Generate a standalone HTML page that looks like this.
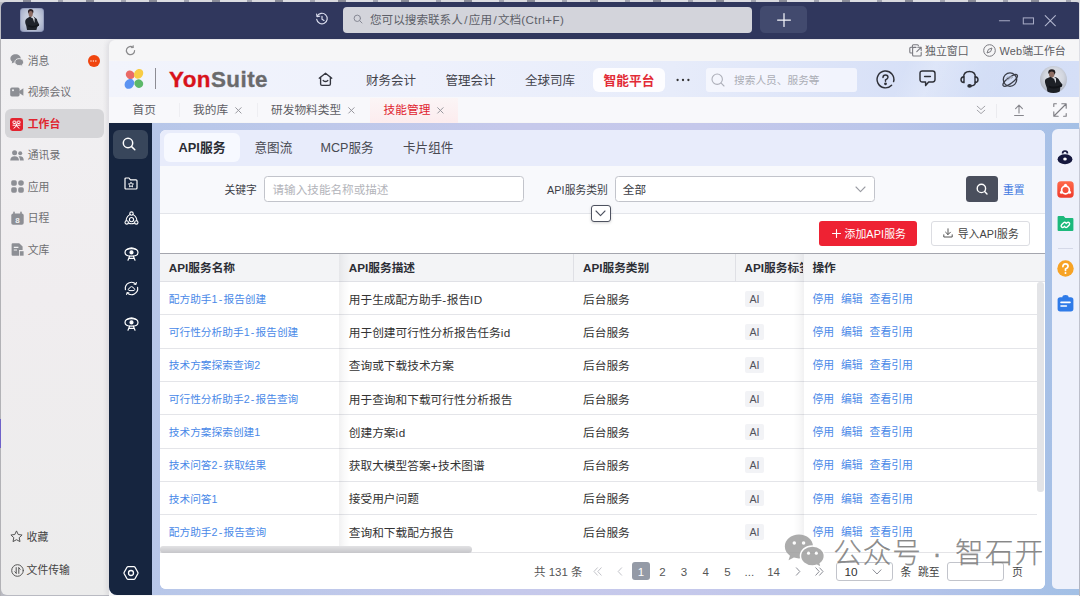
<!DOCTYPE html>
<html lang="zh-CN">
<head>
<meta charset="utf-8">
<title>YonSuite - 技能管理</title>
<style>
*{box-sizing:border-box;margin:0;padding:0}
html,body{width:1080px;height:596px;overflow:hidden}
body{font-family:"Liberation Sans","Noto Sans CJK SC",sans-serif;background:#b9bac2;position:relative;color:#333;font-size:11.5px}
.a{position:absolute}
.t{position:absolute;white-space:nowrap;line-height:16px;height:16px}
svg{position:absolute;overflow:visible}
.side{color:#6e6e72;font-size:10.8px}
.nav{font-size:12.5px;color:#42434b}
.tab{font-size:11.7px;color:#5e5e64}
.th{font-size:11.7px;font-weight:bold;color:#2c2e35}
.lk{font-size:10.7px;color:#4989e8}
.lk .ls{letter-spacing:1.2px}
.td .ls{letter-spacing:.5px}
.td{font-size:11.7px;color:#333}
.op{font-size:10.8px;color:#4989e8}
.pg{font-size:11.5px;color:#555}
.wm{height:40px;line-height:40px;font-size:28.6px;font-weight:300;color:rgba(112,112,112,.8);letter-spacing:.3px;-webkit-text-stroke:.25px rgba(112,112,112,.8)}
.hl{position:absolute;left:160px;width:877px;height:1px;background:#e4e5e9}
</style>
</head>
<body>
<!-- ===== window chrome ===== -->
<div class="a" style="left:0;top:0;width:1080px;height:2px;background:repeating-linear-gradient(90deg,#d8d9de 0 23px,#8a8c98 23px 31px,#dcdde2 31px 58px,#a2a4b0 58px 63px)"></div>
<div class="a" style="left:1px;top:2px;width:1079px;height:592.5px;background:linear-gradient(180deg,#f1f1f3 0%,#f0edef 50%,#ececec 100%);border-radius:5px 5px 0 6px"></div>
<div class="a" style="left:1px;top:1.5px;width:1079px;height:37.6px;background:#30375d;border-radius:5px 4px 0 0"></div>
<!-- main container -->
<div class="a" style="left:109px;top:39.5px;width:971px;height:556.5px;background:#f6f6f7;border-radius:6px 0 0 0;box-shadow:-2px 0 5px rgba(40,40,70,.10)"></div>
<div class="a" style="left:109px;top:61px;width:971px;height:35.8px;background:linear-gradient(112deg,rgba(255,255,255,0) 81%,rgba(255,255,255,.22) 84%,rgba(255,255,255,.05) 89%,rgba(255,255,255,0) 92%),linear-gradient(90deg,#f2f4fc 0%,#eef1fc 32%,#e7ecfa 58%,#dbe3f8 76%,#d2ddf6 90%,#d5dff7 100%)"></div>
<div class="a" style="left:109px;top:96.8px;width:971px;height:25.7px;background:#f8f8fb"></div>
<div class="a" style="left:109px;top:122.5px;width:971px;height:472px;background:linear-gradient(92deg,#b5c6e8 0%,#bcc8ea 18%,#c6c9eb 42%,#c5c8eb 60%,#bbc6ea 78%,#adc1e8 91%,#a2c0e5 100%);border-radius:0 0 0 8px"></div>
<!-- dark sidebar -->
<div class="a" style="left:109px;top:122.5px;width:43px;height:472px;background:#16253f;border-radius:0 0 0 8px"></div>
<!-- card -->
<div class="a" style="left:159.5px;top:129.5px;width:885px;height:459.5px;background:#fff;border-radius:6px;overflow:hidden">
  <div class="a" style="left:0;top:0;width:885px;height:36.5px;background:#e8ecfb"></div>
  <div class="a" style="left:0;top:36.5px;width:885px;height:47px;background:#f8f9fc"></div>
</div>
<!-- right panel -->
<div class="a" style="left:1052.3px;top:128.5px;width:27px;height:460.5px;background:#eef1fb;border-radius:6px 0 0 5px"></div>
<!-- ===== title bar ===== -->
<div class="a" style="left:20px;top:8px;width:24.2px;height:24px;border-radius:4px;background:radial-gradient(ellipse at 50% 45%,#d9dee8 0%,#c3cadb 45%,#969fbe 100%);overflow:hidden;box-shadow:inset 0 0 0 .8px rgba(120,130,170,.55)">
  <svg width="24" height="24" viewBox="0 0 24 24" style="left:0;top:0">
    <ellipse cx="10.7" cy="3.6" rx="2.7" ry="2.6" fill="#2b2024"/>
    <ellipse cx="10.7" cy="6" rx="2.1" ry="2.9" fill="#8d6c63"/>
    <path d="M7 22 Q6.6 18 5.4 15.6 Q4.6 12.2 6.8 10.6 L10 8.6 L12.6 10.4 L13.4 8.6 Q17 10.4 17.4 13 L19.2 16.6 Q19.4 18.2 17.4 18.6 L16.4 22Z" fill="#20242c"/>
    <path d="M12.7 9.6 L13.5 8.8 L14.6 10.4 L14.4 15 Z" fill="#e6e8ee"/>
    <path d="M8.4 16.8 Q12.6 19.4 18.6 16 L19 17.8 Q13 21 8 18.6Z" fill="#14171d"/>
  </svg>
</div>
<!-- history icon -->
<svg width="14" height="14" viewBox="0 0 14 14" style="left:315.3px;top:12.4px" fill="none" stroke="#dde0f0" stroke-width="1.15" stroke-linecap="round" stroke-linejoin="round">
  <path d="M2.2 4.2 A5.3 5.3 0 1 1 1.7 7.4"/>
  <path d="M1.6 2 L2.1 4.6 L4.7 4.2"/>
  <path d="M7 4.2 V7.3 L9 8.5"/>
</svg>
<!-- search box -->
<div class="a" style="left:343px;top:7px;width:409px;height:25.5px;border-radius:4px;background:#d3d4db"></div>
<svg width="10" height="10" viewBox="0 0 10 10" style="left:352.6px;top:14.2px" fill="none" stroke="#868894" stroke-width="1" stroke-linecap="round">
  <circle cx="4.3" cy="4.3" r="3.2"/><path d="M6.7 6.7 L9 9"/>
</svg>
<div class="t" style="left:370px;top:11.5px;font-size:11.6px;color:#5d5f68">您可以搜索联系人<span style="margin:0 1.4px">/</span>应用<span style="margin:0 1.4px">/</span>文档<span style="letter-spacing:.45px">(Ctrl+F)</span></div>
<!-- plus button -->
<div class="a" style="left:760.2px;top:6.3px;width:46.8px;height:26.6px;border-radius:5px;background:#424a6e"></div>
<svg width="12" height="12" viewBox="0 0 12 12" style="left:777.5px;top:13.7px" stroke="#f4f5fa" stroke-width="1.25" stroke-linecap="round">
  <path d="M6 -0.4 V12.4 M-0.4 6 H12.4"/>
</svg>
<!-- window controls -->
<svg width="60" height="14" viewBox="0 0 60 14" style="left:998px;top:14px" fill="none" stroke="#a6aac4" stroke-width="1.05" stroke-linecap="round">
  <path d="M1.4 6.7 H11.6"/>
  <rect x="25.3" y="3.9" width="10.2" height="6"/>
  <path d="M47.2 1.6 L57.4 11.8 M57.4 1.6 L47.2 11.8" stroke="#b4b8d0"/>
</svg>
<!-- ===== outer sidebar ===== -->
<!-- 消息 -->
<svg width="14" height="13" viewBox="0 0 14 13" style="left:10px;top:54.0px">
  <path d="M5.6 0.3 C2.6 0.3 0.4 2.2 0.4 4.6 C0.4 5.9 1.1 7 2.2 7.8 L1.7 9.6 L3.8 8.5 C4.4 8.7 5 8.8 5.6 8.8 C8.6 8.8 10.8 6.9 10.8 4.6 C10.8 2.2 8.6 0.3 5.6 0.3Z" fill="#8d8f95"/>
  <path d="M9.2 4.6 C11.8 4.6 13.6 6.2 13.6 8.1 C13.6 9.2 13 10.1 12.1 10.8 L12.5 12.4 L10.7 11.4 C10.2 11.5 9.7 11.6 9.2 11.6 C6.7 11.6 4.8 10 4.8 8.1 C4.8 6.2 6.7 4.6 9.2 4.6Z" fill="#8d8f95" stroke="#f0f0f2" stroke-width="0.9"/>
</svg>
<div class="t side" style="left:27.8px;top:52.7px">消息</div>
<div class="a" style="left:87.5px;top:54.5px;width:12.2px;height:12.2px;border-radius:50%;background:#f0450f"></div>
<svg width="7" height="2" viewBox="0 0 7 2" style="left:90.2px;top:59.7px" fill="#fde3d9"><circle cx="1" cy="1" r=".75"/><circle cx="3.4" cy="1" r=".75"/><circle cx="5.8" cy="1" r=".75"/></svg>
<!-- 视频会议 -->
<svg width="14" height="10" viewBox="0 0 14 10" style="left:10.3px;top:87.0px">
  <rect x="0.2" y="0.6" width="9.4" height="8.8" rx="1.6" fill="#8d8f95"/>
  <path d="M9.2 4 L13.4 1.2 V8.8 L9.2 6Z" fill="#8d8f95"/>
  <circle cx="3" cy="3.3" r="1" fill="#f0f0f2"/>
</svg>
<div class="t side" style="left:27.8px;top:84.2px">视频会议</div>
<!-- 工作台 active -->
<div class="a" style="left:4.5px;top:109px;width:99.5px;height:29px;border-radius:6px;background:#d5d5d8"></div>
<svg width="13" height="13" viewBox="0 0 13 13" style="left:10.3px;top:117.5px">
  <rect x="0" y="0" width="13" height="13" rx="2.4" fill="#e3232f"/>
  <g fill="none" stroke="#fff" stroke-width="1">
    <rect x="3" y="3.1" width="2.8" height="2.4" rx="0.5"/><rect x="7.2" y="3.1" width="2.8" height="2.4" rx="0.5"/>
    <path d="M2.6 7.2 H10.4 M6.5 5.6 V7.2 M3.6 10.3 Q5.6 9.6 6.5 7.3 Q7.4 9.6 9.4 10.3"/>
  </g>
</svg>
<div class="t" style="left:27.8px;top:115.7px;font-size:10.8px;font-weight:bold;color:#e0242f">工作台</div>
<!-- 通讯录 -->
<svg width="14" height="11" viewBox="0 0 14 11" style="left:10.3px;top:149.7px" fill="#8d8f95">
  <circle cx="4.6" cy="2.8" r="2.5"/><path d="M0.2 10.6 C0.2 7.6 2 6.2 4.6 6.2 C7.2 6.2 9 7.6 9 10.6Z"/>
  <circle cx="10.2" cy="3.3" r="2"/><path d="M9.9 10.6 C9.9 8.6 9.5 7.4 8.6 6.6 C9.1 6.4 9.6 6.3 10.2 6.3 C12.4 6.3 13.8 7.7 13.8 10.6Z"/>
</svg>
<div class="t side" style="left:27.8px;top:147.2px">通讯录</div>
<!-- 应用 -->
<svg width="13" height="13" viewBox="0 0 13 13" style="left:10.6px;top:180.2px" fill="#8d8f95">
  <rect x="0.2" y="0.2" width="5.6" height="5.6" rx="1.7"/><circle cx="10" cy="3" r="2.8"/>
  <rect x="0.2" y="7.2" width="5.6" height="5.6" rx="1.7"/><rect x="7.2" y="7.2" width="5.6" height="5.6" rx="1.7"/>
</svg>
<div class="t side" style="left:27.8px;top:178.7px">应用</div>
<!-- 日程 -->
<svg width="13" height="13" viewBox="0 0 13 13" style="left:10.6px;top:211.7px">
  <path d="M3 0.4 V2.4 M10 0.4 V2.4" stroke="#8d8f95" stroke-width="1.6" stroke-linecap="round"/>
  <rect x="0.3" y="1.6" width="12.4" height="11.2" rx="1.8" fill="#8d8f95"/>
  <text x="6.5" y="11" font-size="8" font-weight="bold" text-anchor="middle" fill="#f0f0f2" font-family="Liberation Sans,sans-serif">8</text>
</svg>
<div class="t side" style="left:27.8px;top:210.2px">日程</div>
<!-- 文库 -->
<svg width="13" height="13" viewBox="0 0 13 13" style="left:10.6px;top:243.2px">
  <path d="M1.8 0.3 H8.2 L11.6 3.6 V7 H8 V12.7 H1.8 Q0.6 12.7 0.6 11.5 V1.5 Q0.6 0.3 1.8 0.3Z" fill="#8d8f95"/>
  <path d="M2.8 4.4 H7.4 M2.8 7 H6" stroke="#f0f0f2" stroke-width="1.1"/>
  <path d="M8.8 8.2 H12.6 V12.7 H8.8Z" fill="#8d8f95"/>
</svg>
<div class="t side" style="left:27.8px;top:241.7px">文库</div>
<!-- 收藏 -->
<svg width="13" height="13" viewBox="0 0 13 13" style="left:10.3px;top:530px" fill="none" stroke="#555" stroke-width="1" stroke-linejoin="round">
  <path d="M6.5 0.9 L8.2 4.5 L12.1 5 L9.2 7.7 L10 11.6 L6.5 9.7 L3 11.6 L3.8 7.7 L0.9 5 L4.8 4.5Z"/>
</svg>
<div class="t" style="left:26.6px;top:528.7px;font-size:10.8px;color:#444">收藏</div>
<!-- 文件传输 -->
<svg width="13" height="13" viewBox="0 0 13 13" style="left:10.5px;top:564px" fill="none" stroke="#555" stroke-width="1" stroke-linecap="round" stroke-linejoin="round">
  <circle cx="6.5" cy="6.5" r="5.8"/>
  <path d="M5.2 3.6 V9.2 M5.2 9.2 L3.8 7.8 M7.8 9.4 V3.8 M7.8 3.8 L9.2 5.2"/>
</svg>
<div class="t" style="left:26.6px;top:562.4px;font-size:10.8px;color:#444">文件传输</div>
<!-- stray left-edge artefacts of window behind -->
<div class="a" style="left:0;top:40px;width:1.2px;height:556px;background:#b2b2b6"></div>
<div class="a" style="left:0;top:419px;width:1.3px;height:29px;background:#6f62c9"></div>
<!-- ===== row 2 : refresh / window links ===== -->
<svg width="11" height="11" viewBox="0 0 11 11" style="left:125.3px;top:45.3px" fill="none" stroke="#8a8a8c" stroke-width="1.2" stroke-linecap="round" stroke-linejoin="round">
  <path d="M9.6 5.5 A4.1 4.1 0 1 1 8 2.3"/><path d="M8.2 0.6 V2.6 H6.2" stroke-width="1"/>
</svg>
<svg width="13" height="13" viewBox="0 0 13 13" style="left:908.7px;top:44.3px" fill="none" stroke="#7a7a80" stroke-width="1.1" stroke-linecap="round" stroke-linejoin="round">
  <path d="M3.4 3.2 V1.8 Q3.4 0.8 4.4 0.8 H8.4 Q9.4 0.8 9.4 1.8"/>
  <path d="M3.4 3.2 H1.8 Q0.8 3.2 0.8 4.2 V8 Q0.8 9 1.8 9 H3.4"/>
  <path d="M7 3.4 H4.6 Q3.6 3.4 3.6 4.4 V11 Q3.6 12 4.6 12 H11.2 Q12.2 12 12.2 11 V8.4"/>
  <path d="M8.8 3.2 H12.2 V6.6 M12 3.4 L7.8 7.6"/>
</svg>
<div class="t" style="left:925px;top:43.2px;font-size:10.9px;color:#5c5c62">独立窗口</div>
<svg width="13" height="13" viewBox="0 0 13 13" style="left:982.8px;top:44.2px" fill="none" stroke="#7a7a80" stroke-width="1" stroke-linejoin="round">
  <circle cx="6.5" cy="6.5" r="5.8"/><path d="M9 4 L7.6 7.6 L4 9 L5.4 5.4Z"/>
</svg>
<div class="t" style="left:999.4px;top:43.2px;font-size:10.9px;color:#5c5c62"><span style="letter-spacing:.2px">Web</span>端工作台</div>

<!-- ===== row 3 : YonSuite header ===== -->
<svg width="21" height="21" viewBox="0 0 21 21" style="left:123.8px;top:69.3px">
  <ellipse cx="6.2" cy="5.8" rx="4.6" ry="4.1" fill="#ea6a66" transform="rotate(35 6.2 5.8)"/>
  <ellipse cx="14.6" cy="4.8" rx="4.3" ry="5.2" fill="#f8cc45" transform="rotate(38 14.6 4.8)"/>
  <ellipse cx="5.4" cy="14.8" rx="4.4" ry="5.4" fill="#5b93f2" transform="rotate(40 5.4 14.8)"/>
  <ellipse cx="14.8" cy="14.6" rx="4.5" ry="4.2" fill="#5cb86a" transform="rotate(30 14.8 14.6)"/>
</svg>
<div class="a" style="left:155.2px;top:68px;width:1px;height:20.5px;background:#8c8c94"></div>
<div class="t" style="left:169px;top:64.9px;height:30px;line-height:30px;font-size:22.4px;font-weight:bold;letter-spacing:.45px;-webkit-text-stroke:.35px;color:#6a6a6c"><span style="color:#d8121b">Yon</span>Suite</div>
<!-- home icon -->
<svg width="15" height="15" viewBox="0 0 15 15" style="left:317.5px;top:71.6px" fill="none" stroke="#34363f" stroke-width="1.35" stroke-linejoin="round" stroke-linecap="round">
  <path d="M1.2 6.2 L7.5 1.2 L13.8 6.2"/><path d="M2.6 5.4 V12 Q2.6 13.4 4 13.4 H11 Q12.4 13.4 12.4 12 V5.4"/><path d="M5.2 8.4 Q7.5 10.6 9.8 8.4"/>
</svg>
<div class="t nav" style="left:366px;top:73.3px">财务会计</div>
<div class="t nav" style="left:445.5px;top:73.3px">管理会计</div>
<div class="t nav" style="left:525px;top:73.3px">全球司库</div>
<div class="a" style="left:593.3px;top:67.7px;width:72px;height:24.2px;border-radius:6px;background:#fdfdff"></div>
<div class="t" style="left:603.6px;top:72.6px;font-size:12.7px;font-weight:bold;color:#e22a36">智能平台</div>
<svg width="14" height="4" viewBox="0 0 14 4" style="left:676.4px;top:77.5px" fill="#333"><circle cx="1.6" cy="2" r="1.15"/><circle cx="7" cy="2" r="1.15"/><circle cx="12.4" cy="2" r="1.15"/></svg>
<div class="a" style="left:705.5px;top:67.7px;width:151.5px;height:24.3px;border-radius:3px;background:rgba(248,249,254,.78)"></div>
<svg width="14" height="14" viewBox="0 0 14 14" style="left:711.4px;top:73.2px" fill="none" stroke="#aeb0ba" stroke-width="1.1" stroke-linecap="round"><circle cx="6.2" cy="6.2" r="5.2"/><path d="M10.2 10.2 L13 13"/></svg>
<div class="t" style="left:734px;top:72px;font-size:10.7px;color:#abadb5">搜索人员、服务等</div>
<!-- header right icons -->
<svg width="19" height="19" viewBox="0 0 19 19" style="left:875.5px;top:70px" fill="none" stroke="#2e3038" stroke-width="1.45" stroke-linecap="round">
  <path d="M15.6 15.2 A8.4 8.4 0 1 1 17.6 11.6"/><path d="M7 7.6 Q7 5 9.5 5 Q12 5 12 7.3 Q12 8.8 9.5 10 V11.2"/><circle cx="9.5" cy="13.8" r=".7" fill="#2e3038"/>
</svg>
<svg width="17" height="17" viewBox="0 0 17 17" style="left:919.2px;top:70.4px" fill="none" stroke="#2e3038" stroke-width="1.45" stroke-linecap="round" stroke-linejoin="round">
  <path d="M3.4 1 H13.6 Q16 1 16 3.4 V9.6 Q16 12 13.6 12 H9.6 L6.6 15.6 V12 H3.4 Q1 12 1 9.6 V3.4 Q1 1 3.4 1Z"/><path d="M5.6 6.4 H11.4"/>
</svg>
<svg width="19" height="18" viewBox="0 0 19 18" style="left:960.3px;top:70.2px" fill="none" stroke="#2e3038" stroke-width="1.45" stroke-linecap="round" stroke-linejoin="round">
  <path d="M3.6 7 Q3.8 1.4 9.5 1.4 Q15.2 1.4 15.4 7"/>
  <path d="M4 6.8 Q1 7 1 9.8 Q1 12.4 4 12.6Z"/><path d="M15 6.8 Q18 7 18 9.8 Q18 12.4 15 12.6Z"/>
  <path d="M15.4 12.6 Q15 15.6 11 15.9"/><ellipse cx="9.6" cy="15.9" rx="1.6" ry="1.1" fill="#2e3038"/>
</svg>
<svg width="20" height="19" viewBox="0 0 20 19" style="left:1000.2px;top:70px" fill="none" stroke="#3a3d48" stroke-width="1.3" stroke-linecap="round">
  <circle cx="10" cy="9.6" r="6.7"/>
  <ellipse cx="10.2" cy="10.4" rx="8.8" ry="2.9" transform="rotate(-37 10.2 10.4)" stroke-width="1.15"/>
  <circle cx="8" cy="8.4" r="1.5" stroke-width=".8" stroke="#9ea3b4"/><circle cx="11.2" cy="7.4" r="1" stroke-width=".8" stroke="#9ea3b4"/>
</svg>
<div class="a" style="left:1040.1px;top:65.6px;width:27px;height:27.2px;border-radius:50%;background:radial-gradient(circle at 52% 42%,#e6e8ee 0%,#d2d6df 45%,#a3a9b8 85%,#8f95a6 100%);overflow:hidden">
  <svg width="27" height="27" viewBox="0 0 27 27" style="left:0;top:0">
    <ellipse cx="11.8" cy="6.2" rx="3.5" ry="3" fill="#1f1b1e"/>
    <ellipse cx="11.7" cy="8.6" rx="2.7" ry="3.1" fill="#8e6e64"/>
    <path d="M7.6 27 Q7 21 5.4 18 Q4 14 6.6 12.6 L10.6 10.8 L13.6 12.8 L14.6 10.8 Q19 12.4 19.6 15 L22.4 18.4 Q22.8 20.4 20.4 21 L19.6 27Z" fill="#1d2026"/>
    <path d="M13.8 12 L14.8 11 L16 12.8 L15.8 17.6Z" fill="#e2e4ea"/>
    <path d="M9 19.4 Q14 22.2 21.6 18.4 L22 20.4 Q15 24 8.6 21.4Z" fill="#111318"/>
  </svg>
</div>

<!-- ===== row 4 : page tabs ===== -->
<div class="t tab" style="left:132.5px;top:102px">首页</div>
<div class="a" style="left:179.3px;top:103px;width:1px;height:14px;background:#eeeef2"></div>
<div class="t tab" style="left:193px;top:102px">我的库</div>
<svg width="6.8" height="6.8" viewBox="0 0 8 8" style="left:235.1px;top:106.8px" stroke="#96969c" stroke-width="1.15" stroke-linecap="round"><path d="M.8 .8 L7.2 7.2 M7.2 .8 L.8 7.2"/></svg>
<div class="a" style="left:256.5px;top:103px;width:1px;height:14px;background:#eeeef2"></div>
<div class="t tab" style="left:271px;top:102px">研发物料类型</div>
<svg width="6.8" height="6.8" viewBox="0 0 8 8" style="left:347.5px;top:106.8px" stroke="#96969c" stroke-width="1.15" stroke-linecap="round"><path d="M.8 .8 L7.2 7.2 M7.2 .8 L.8 7.2"/></svg>
<div class="a" style="left:370px;top:97.5px;width:87.5px;height:25px;background:linear-gradient(180deg,#fbf5f6 0%,#fcecee 100%)"></div>
<div class="t tab" style="left:383.6px;top:102px;color:#e0242f">技能管理</div>
<svg width="6.8" height="6.8" viewBox="0 0 8 8" style="left:436.5px;top:106.8px" stroke="#96969c" stroke-width="1.15" stroke-linecap="round"><path d="M.8 .8 L7.2 7.2 M7.2 .8 L.8 7.2"/></svg>
<!-- right tools -->
<svg width="10" height="10" viewBox="0 0 10 10" style="left:976.4px;top:105.4px" fill="none" stroke="#a4a4aa" stroke-width="1" stroke-linecap="round" stroke-linejoin="round"><path d="M1.2 1.2 L5 4.6 L8.8 1.2 M1.2 5.2 L5 8.6 L8.8 5.2"/></svg>
<div class="a" style="left:996.2px;top:103.5px;width:1px;height:14px;background:#ebebef"></div>
<svg width="12" height="13" viewBox="0 0 12 13" style="left:1012.7px;top:103.6px" fill="none" stroke="#86868c" stroke-width="1.1" stroke-linecap="round" stroke-linejoin="round"><path d="M6 9 V1.4 M2.6 4.6 L6 1.2 L9.4 4.6 M1.6 11.5 H10.4"/></svg>
<svg width="14" height="14" viewBox="0 0 14 14" style="left:1053.4px;top:102.6px" fill="none" stroke="#7e7e84" stroke-width="1.1" stroke-linecap="round" stroke-linejoin="round"><path d="M8.8 .8 H13.2 V5.2 M13 1 L1 13 M.8 8.8 V13.2 H5.2 M.8 3.4 V.8 H3.4 M13.2 10.6 V13.2 H10.6"/></svg>
<!-- ===== dark icon bar ===== -->
<div class="a" style="left:113.4px;top:129.8px;width:34.4px;height:28.8px;border-radius:6px;background:#38465b"></div>
<svg width="14" height="14" viewBox="0 0 14 14" style="left:122px;top:136.6px" fill="none" stroke="#fff" stroke-width="1.5" stroke-linecap="round"><circle cx="6" cy="6" r="4.7"/><path d="M9.6 9.6 L12.8 12.8"/></svg>
<!-- folder star -->
<svg width="14" height="13" viewBox="0 0 14 13" style="left:124px;top:176.8px" fill="none" stroke="#fff" stroke-width="1.2" stroke-linejoin="round">
  <path d="M1 2 Q1 1 2 1 H5 L6.4 2.8 H12 Q13 2.8 13 3.8 V11 Q13 12 12 12 H2 Q1 12 1 11Z"/>
  <path d="M7 5.2 L7.8 6.8 L9.5 7 L8.2 8.2 L8.6 9.9 L7 9 L5.4 9.9 L5.8 8.2 L4.5 7 L6.2 6.8Z" stroke-width=".9"/>
</svg>
<!-- molecule -->
<svg width="15" height="15" viewBox="0 0 15 15" style="left:123.5px;top:210.5px" fill="none" stroke="#fff" stroke-width="1.1" stroke-linecap="round">
  <circle cx="7.5" cy="2.6" r="1.7"/><circle cx="2.7" cy="11.4" r="1.7"/><circle cx="12.3" cy="11.4" r="1.7"/><circle cx="7.5" cy="8.6" r="2.1"/>
  <path d="M5.9 3.6 Q2.2 5.8 2.2 9.6 M9.1 3.6 Q12.8 5.8 12.8 9.6 M4.5 12 Q7.5 13.6 10.5 12"/>
</svg>
<!-- robot eye -->
<svg width="15" height="15" viewBox="0 0 15 15" style="left:123.5px;top:246px" fill="none" stroke="#fff" stroke-width="1.2" stroke-linecap="round" stroke-linejoin="round">
  <path d="M1 6.4 Q1 2.6 7.5 2.6 Q14 2.6 14 6.4 Q14 10.2 7.5 10.2 Q1 10.2 1 6.4Z"/><path d="M3 3.4 Q7.5 .2 12 3.4"/>
  <circle cx="7.5" cy="6.4" r="1.5" fill="#fff"/><path d="M5.6 10.2 L4 14.2 M9.4 10.2 L11 14.2 M5 12.4 H10"/>
</svg>
<!-- cycle cloud -->
<svg width="15" height="15" viewBox="0 0 15 15" style="left:123.5px;top:281.3px" fill="none" stroke="#fff" stroke-width="1.15" stroke-linecap="round" stroke-linejoin="round">
  <path d="M11.9 3.2 A6.2 6.2 0 0 0 1.4 8.6 M3.1 11.8 A6.2 6.2 0 0 0 13.6 6.4"/>
  <path d="M12.4 1.4 L12 3.4 L10 3.2 M2.6 13.6 L3 11.6 L5 11.8" stroke-width=".95"/>
  <path d="M5.6 9.6 Q4.3 9.6 4.3 8.4 Q4.4 7.3 5.6 7.3 Q6 5.6 7.6 5.6 Q9.1 5.6 9.5 7.2 Q10.7 7.3 10.7 8.5 Q10.7 9.6 9.5 9.6Z" stroke-width="1"/>
</svg>
<!-- robot eye 2 -->
<svg width="15" height="15" viewBox="0 0 15 15" style="left:123.5px;top:316px" fill="none" stroke="#fff" stroke-width="1.2" stroke-linecap="round" stroke-linejoin="round">
  <path d="M1 6.4 Q1 2.6 7.5 2.6 Q14 2.6 14 6.4 Q14 10.2 7.5 10.2 Q1 10.2 1 6.4Z"/><path d="M3 3.4 Q7.5 .2 12 3.4"/>
  <circle cx="7.5" cy="6.4" r="1.5" fill="#fff"/><path d="M5.6 10.2 L4 14.2 M9.4 10.2 L11 14.2 M5 12.4 H10"/>
</svg>
<!-- settings hex -->
<svg width="16" height="16" viewBox="0 0 16 16" style="left:123.3px;top:565px" fill="none" stroke="#fff" stroke-width="1.3" stroke-linejoin="round">
  <path d="M5.2 1.6 H10.8 Q11.6 1.6 12 2.3 L14.8 7.2 Q15.2 8 14.8 8.8 L12 13.7 Q11.6 14.4 10.8 14.4 H5.2 Q4.4 14.4 4 13.7 L1.2 8.8 Q.8 8 1.2 7.2 L4 2.3 Q4.4 1.6 5.2 1.6Z"/><circle cx="8" cy="8" r="2.5"/>
</svg>

<!-- ===== right floating panel ===== -->
<svg width="16" height="15" viewBox="0 0 16 15" style="left:1057.3px;top:149.5px">
  <path d="M5.6 3.4 Q5.6 1 8 1 Q10.4 1 10.4 3.4" fill="none" stroke="#15183e" stroke-width="1.7"/>
  <ellipse cx="8" cy="9.2" rx="7.4" ry="5" fill="#15183e"/>
  <ellipse cx="8" cy="9" rx="1.8" ry="1.5" fill="#fff"/>
</svg>
<svg width="17" height="17" viewBox="0 0 17 17" style="left:1056.8px;top:180.5px">
  <defs><linearGradient id="rg" x1="0" y1="0" x2="0" y2="1"><stop offset="0" stop-color="#ff6a4a"/><stop offset="1" stop-color="#ee3a2c"/></linearGradient></defs>
  <rect x=".3" y=".3" width="16.4" height="16.4" rx="3.6" fill="url(#rg)"/>
  <circle cx="8.5" cy="9" r="3.9" fill="none" stroke="#fff" stroke-width="1.7"/>
  <circle cx="8.5" cy="4.3" r="1.5" fill="#fff"/><circle cx="4.3" cy="11.4" r="1.4" fill="#fff"/><circle cx="12.7" cy="11.4" r="1.4" fill="#fff"/>
</svg>
<svg width="17" height="17" viewBox="0 0 17 17" style="left:1056.8px;top:214.8px">
  <path d="M1.6 1 H6.6 L8.4 3 H15.4 Q16.4 3 16.4 4 V15 Q16.4 16 15.4 16 H1.6 Q.6 16 .6 15 V2 Q.6 1 1.6 1Z" fill="#1db97c"/>
  <g fill="none" stroke="#fff" stroke-width="1.4" stroke-linecap="round"><path d="M7.6 11.2 L6.8 12 Q5.6 13 4.6 12 Q3.6 11 4.6 9.8 L6.6 7.8 Q7.8 6.8 8.8 7.8"/><path d="M9.2 8.6 L10 7.8 Q11.2 6.8 12.2 7.8 Q13.2 8.8 12.2 10 L10.2 12 Q9 13 8 12"/></g>
</svg>
<div class="a" style="left:1058px;top:248px;width:15px;height:1px;background:#d5d9e8"></div>
<svg width="17" height="17" viewBox="0 0 17 17" style="left:1056.8px;top:259.8px">
  <circle cx="8.5" cy="8.5" r="8.2" fill="#f7a325"/>
  <path d="M5.9 6.6 Q5.9 3.8 8.5 3.8 Q11.1 3.8 11.1 6.3 Q11.1 7.8 8.5 9 V10.4" fill="none" stroke="#fff" stroke-width="1.7" stroke-linecap="round"/><circle cx="8.5" cy="13.1" r="1" fill="#fff"/>
</svg>
<svg width="17" height="18" viewBox="0 0 17 18" style="left:1056.8px;top:293.5px">
  <rect x=".6" y="3.2" width="15.8" height="14.2" rx="2.6" fill="#2f7be8"/>
  <path d="M5.4 4.4 V3 Q5.4 1 8.5 1 Q11.6 1 11.6 3 V4.4Z" fill="#2f7be8"/>
  <path d="M4 8.4 H13 M4 12 H9.4" stroke="#fff" stroke-width="1.6" stroke-linecap="round"/>
</svg>
<!-- ===== card : tabs ===== -->
<div class="a" style="left:164px;top:132.6px;width:76px;height:29.4px;border-radius:6px;background:#f7f9ff"></div>
<div class="t" style="left:178.6px;top:140.2px;font-size:12.8px;font-weight:bold;color:#2a2c33">API服务</div>
<div class="t" style="left:254.5px;top:140.2px;font-size:12.6px;color:#484a52">意图流</div>
<div class="t" style="left:320.5px;top:140.2px;font-size:12.6px;color:#484a52">MCP服务</div>
<div class="t" style="left:403px;top:140.2px;font-size:12.6px;color:#484a52">卡片组件</div>
<!-- ===== search form ===== -->
<div class="t" style="left:224.4px;top:181.6px;font-size:10.8px;color:#3c3e46">关键字</div>
<div class="a" style="left:263.7px;top:176.4px;width:260.3px;height:25.2px;border:1px solid #c2c4cb;border-radius:3.5px;background:#fff"></div>
<div class="t" style="left:272.5px;top:181.8px;font-size:11.6px;color:#b3b4ba">请输入技能名称或描述</div>
<div class="t" style="left:547px;top:181.6px;font-size:10.8px;color:#3c3e46"><span style="letter-spacing:.1px">API</span>服务类别</div>
<div class="a" style="left:614.5px;top:176.4px;width:260.5px;height:25.2px;border:1px solid #c2c4cb;border-radius:3.5px;background:#fff"></div>
<div class="t" style="left:622.8px;top:181.8px;font-size:11.6px;color:#3a3c44">全部</div>
<svg width="11" height="7" viewBox="0 0 11 7" style="left:854.5px;top:186px" fill="none" stroke="#9a9ca3" stroke-width="1.1" stroke-linecap="round" stroke-linejoin="round"><path d="M1 1 L5.5 5.6 L10 1"/></svg>
<div class="a" style="left:966px;top:176.4px;width:31.5px;height:25.2px;border-radius:3.5px;background:#4a4f5d"></div>
<svg width="12" height="12" viewBox="0 0 12 12" style="left:975.6px;top:183px" fill="none" stroke="#fff" stroke-width="1.4" stroke-linecap="round"><circle cx="5.4" cy="5.4" r="4.2"/><path d="M8.6 8.6 L11 11"/></svg>
<div class="t" style="left:1003px;top:181.7px;font-size:10.8px;color:#3b76e0">重置</div>
<div class="a" style="left:159.5px;top:212.6px;width:885px;height:1px;background:#e3e5ea"></div>
<div class="a" style="left:591px;top:205.3px;width:19.8px;height:16.4px;border:1px solid #4e5260;border-radius:3px;background:#fff;box-shadow:0 1px 3px rgba(0,0,0,.18)"></div>
<svg width="11" height="7" viewBox="0 0 11 7" style="left:595.4px;top:210.4px" fill="none" stroke="#4e5260" stroke-width="1.1" stroke-linecap="round" stroke-linejoin="round"><path d="M1 1 L5.5 5.6 L10 1"/></svg>
<!-- ===== toolbar ===== -->
<div class="a" style="left:818.9px;top:221px;width:98.2px;height:24.6px;border-radius:3px;background:#ee2233"></div>
<svg width="9" height="9" viewBox="0 0 9 9" style="left:831.6px;top:228.8px" stroke="#fff" stroke-width="1.1" stroke-linecap="round"><path d="M4.5 .5 V8.5 M.5 4.5 H8.5"/></svg>
<div class="t" style="left:844.5px;top:226px;font-size:10.9px;color:#fff">添加<span style="letter-spacing:.1px">API</span>服务</div>
<div class="a" style="left:931.4px;top:221px;width:98.8px;height:24.6px;border:1px solid #dcdde2;border-radius:3px;background:#fff"></div>
<svg width="10" height="10" viewBox="0 0 10 10" style="left:943.2px;top:228px" fill="none" stroke="#555" stroke-width="1" stroke-linecap="round" stroke-linejoin="round"><path d="M5 .8 V6.4 M2.6 4.2 L5 6.6 L7.4 4.2 M.8 6.8 V9 H9.2 V6.8"/></svg>
<div class="t" style="left:957.8px;top:226px;font-size:10.8px;color:#444">导入<span style="letter-spacing:.1px">API</span>服务</div>
<!-- ===== table ===== -->
<div class="a" style="left:159.5px;top:253px;width:885px;height:29px;background:#f3f4f6;border-top:1px solid #a4a6ae;border-bottom:1px solid #e0e1e6"></div>
<div class="a" style="left:572.6px;top:254px;width:1px;height:28px;background:#dfe0e5"></div>
<div class="a" style="left:735px;top:254px;width:1px;height:28px;background:#dfe0e5"></div>
<div class="t th" style="left:168.8px;top:260.2px">API服务名称</div>
<div class="t th" style="left:348.8px;top:260.2px">API服务描述</div>
<div class="t th" style="left:583px;top:260.2px">API服务类别</div>
<div class="a" style="left:740px;top:255px;width:62.6px;height:26px;overflow:hidden"><div class="t th" style="left:4.6px;top:5.2px">API服务标签</div></div>
<div class="hl" style="top:314.4px"></div>
<div class="t lk" style="left:168.8px;top:290.8px">配方助手<span class="ls">1-</span>报告创建</div>
<div class="t td" style="left:348.8px;top:291.6px">用于生成配方助手<span class="ls">-</span>报告<span class="ls">ID</span></div>
<div class="t td" style="left:583px;top:291.6px">后台服务</div>
<div class="a" style="left:744.6px;top:290.6px;width:19.4px;height:16px;border-radius:2px;background:#f2f3f6"></div>
<div class="t" style="left:749.4px;top:290.8px;font-size:10.6px;color:#50525a">AI</div>
<div class="t op" style="left:812.4px;top:290.8px">停用</div>
<div class="t op" style="left:841px;top:290.8px">编辑</div>
<div class="t op" style="left:869.6px;top:290.8px">查看引用</div>
<div class="hl" style="top:347.7px"></div>
<div class="t lk" style="left:168.8px;top:324.1px">可行性分析助手<span class="ls">1-</span>报告创建</div>
<div class="t td" style="left:348.8px;top:324.9px">用于创建可行性分析报告任务<span class="ls">id</span></div>
<div class="t td" style="left:583px;top:324.9px">后台服务</div>
<div class="a" style="left:744.6px;top:323.9px;width:19.4px;height:16px;border-radius:2px;background:#f2f3f6"></div>
<div class="t" style="left:749.4px;top:324.1px;font-size:10.6px;color:#50525a">AI</div>
<div class="t op" style="left:812.4px;top:324.1px">停用</div>
<div class="t op" style="left:841px;top:324.1px">编辑</div>
<div class="t op" style="left:869.6px;top:324.1px">查看引用</div>
<div class="hl" style="top:381.0px"></div>
<div class="t lk" style="left:168.8px;top:357.4px">技术方案探索查询<span class="ls">2</span></div>
<div class="t td" style="left:348.8px;top:358.2px">查询或下载技术方案</div>
<div class="t td" style="left:583px;top:358.2px">后台服务</div>
<div class="a" style="left:744.6px;top:357.2px;width:19.4px;height:16px;border-radius:2px;background:#f2f3f6"></div>
<div class="t" style="left:749.4px;top:357.4px;font-size:10.6px;color:#50525a">AI</div>
<div class="t op" style="left:812.4px;top:357.4px">停用</div>
<div class="t op" style="left:841px;top:357.4px">编辑</div>
<div class="t op" style="left:869.6px;top:357.4px">查看引用</div>
<div class="hl" style="top:414.3px"></div>
<div class="t lk" style="left:168.8px;top:390.7px">可行性分析助手<span class="ls">2-</span>报告查询</div>
<div class="t td" style="left:348.8px;top:391.5px">用于查询和下载可行性分析报告</div>
<div class="t td" style="left:583px;top:391.5px">后台服务</div>
<div class="a" style="left:744.6px;top:390.5px;width:19.4px;height:16px;border-radius:2px;background:#f2f3f6"></div>
<div class="t" style="left:749.4px;top:390.7px;font-size:10.6px;color:#50525a">AI</div>
<div class="t op" style="left:812.4px;top:390.7px">停用</div>
<div class="t op" style="left:841px;top:390.7px">编辑</div>
<div class="t op" style="left:869.6px;top:390.7px">查看引用</div>
<div class="hl" style="top:447.6px"></div>
<div class="t lk" style="left:168.8px;top:424.0px">技术方案探索创建<span class="ls">1</span></div>
<div class="t td" style="left:348.8px;top:424.8px">创建方案<span class="ls">id</span></div>
<div class="t td" style="left:583px;top:424.8px">后台服务</div>
<div class="a" style="left:744.6px;top:423.8px;width:19.4px;height:16px;border-radius:2px;background:#f2f3f6"></div>
<div class="t" style="left:749.4px;top:424.0px;font-size:10.6px;color:#50525a">AI</div>
<div class="t op" style="left:812.4px;top:424.0px">停用</div>
<div class="t op" style="left:841px;top:424.0px">编辑</div>
<div class="t op" style="left:869.6px;top:424.0px">查看引用</div>
<div class="hl" style="top:480.9px"></div>
<div class="t lk" style="left:168.8px;top:457.3px">技术问答<span class="ls">2-</span>获取结果</div>
<div class="t td" style="left:348.8px;top:458.1px">获取大模型答案<span class="ls">+</span>技术图谱</div>
<div class="t td" style="left:583px;top:458.1px">后台服务</div>
<div class="a" style="left:744.6px;top:457.1px;width:19.4px;height:16px;border-radius:2px;background:#f2f3f6"></div>
<div class="t" style="left:749.4px;top:457.3px;font-size:10.6px;color:#50525a">AI</div>
<div class="t op" style="left:812.4px;top:457.3px">停用</div>
<div class="t op" style="left:841px;top:457.3px">编辑</div>
<div class="t op" style="left:869.6px;top:457.3px">查看引用</div>
<div class="hl" style="top:514.2px"></div>
<div class="t lk" style="left:168.8px;top:490.6px">技术问答<span class="ls">1</span></div>
<div class="t td" style="left:348.8px;top:491.4px">接受用户问题</div>
<div class="t td" style="left:583px;top:491.4px">后台服务</div>
<div class="a" style="left:744.6px;top:490.4px;width:19.4px;height:16px;border-radius:2px;background:#f2f3f6"></div>
<div class="t" style="left:749.4px;top:490.6px;font-size:10.6px;color:#50525a">AI</div>
<div class="t op" style="left:812.4px;top:490.6px">停用</div>
<div class="t op" style="left:841px;top:490.6px">编辑</div>
<div class="t op" style="left:869.6px;top:490.6px">查看引用</div>
<div class="t lk" style="left:168.8px;top:523.9px">配方助手<span class="ls">2-</span>报告查询</div>
<div class="t td" style="left:348.8px;top:524.7px">查询和下载配方报告</div>
<div class="t td" style="left:583px;top:524.7px">后台服务</div>
<div class="a" style="left:744.6px;top:523.7px;width:19.4px;height:16px;border-radius:2px;background:#f2f3f6"></div>
<div class="t" style="left:749.4px;top:523.9px;font-size:10.6px;color:#50525a">AI</div>
<div class="t op" style="left:812.4px;top:523.9px">停用</div>
<div class="t op" style="left:841px;top:523.9px">编辑</div>
<div class="t op" style="left:869.6px;top:523.9px">查看引用</div>
<div class="a" style="left:338.5px;top:254px;width:11px;height:293px;background:linear-gradient(90deg,rgba(0,0,20,.055),rgba(0,0,20,.02) 50%,rgba(0,0,0,0))"></div>
<div class="a" style="left:792.6px;top:254px;width:11px;height:293px;background:linear-gradient(270deg,rgba(0,0,20,.055),rgba(0,0,20,.02) 50%,rgba(0,0,0,0))"></div>
<div class="t th" style="left:812.4px;top:260.2px">操作</div>
<div class="a" style="left:159.5px;top:546px;width:885px;height:43px;background:#fff;border-radius:0 0 6px 6px"></div>
<div class="a" style="left:160px;top:551.6px;width:877px;height:1.6px;background:#e4e4e7"></div>
<div class="a" style="left:160px;top:546px;width:312.2px;height:7.2px;background:linear-gradient(180deg,#e2e2e4,#c6c6ca);border-radius:3px 3.5px 3.5px 3px"></div>
<div class="a" style="left:1037px;top:282px;width:7.5px;height:265px;background:#fff"></div>
<div class="a" style="left:1036.8px;top:282px;width:7px;height:209.5px;background:#e3e4e7;border-radius:3px"></div>
<!-- ===== pagination ===== -->
<div class="t pg" style="left:534px;top:563.6px">共 131 条</div>
<svg width="9" height="9" viewBox="0 0 9 9" style="left:593.4px;top:567px" fill="none" stroke="#c3c4ca" stroke-width="1" stroke-linecap="round" stroke-linejoin="round"><path d="M4.4 .8 L1 4.5 L4.4 8.2 M8.2 .8 L4.8 4.5 L8.2 8.2"/></svg>
<svg width="6" height="9" viewBox="0 0 6 9" style="left:616.6px;top:567px" fill="none" stroke="#c3c4ca" stroke-width="1" stroke-linecap="round" stroke-linejoin="round"><path d="M4.6 .8 L1.2 4.5 L4.6 8.2"/></svg>
<div class="a" style="left:632px;top:562px;width:18px;height:18px;border-radius:3px;background:#949aa6"></div>
<div class="t" style="left:632px;top:563.6px;width:18px;text-align:center;font-size:11.5px;color:#fff">1</div>
<div class="t pg" style="left:650.5px;top:563.6px;width:24px;text-align:center">2</div>
<div class="t pg" style="left:672.0px;top:563.6px;width:24px;text-align:center">3</div>
<div class="t pg" style="left:693.6px;top:563.6px;width:24px;text-align:center">4</div>
<div class="t pg" style="left:715.4px;top:563.6px;width:24px;text-align:center">5</div>
<div class="t pg" style="left:737.4px;top:563.6px;width:24px;text-align:center">...</div>
<div class="t pg" style="left:761.6px;top:563.6px;width:24px;text-align:center">14</div>
<svg width="6" height="9" viewBox="0 0 6 9" style="left:794.6px;top:567px" fill="none" stroke="#8c8e96" stroke-width="1" stroke-linecap="round" stroke-linejoin="round"><path d="M1.4 .8 L4.8 4.5 L1.4 8.2"/></svg>
<svg width="9" height="9" viewBox="0 0 9 9" style="left:814.6px;top:567px" fill="none" stroke="#8c8e96" stroke-width="1" stroke-linecap="round" stroke-linejoin="round"><path d="M.8 .8 L4.2 4.5 L.8 8.2 M4.6 .8 L8 4.5 L4.6 8.2"/></svg>
<div class="a" style="left:835.7px;top:562px;width:57px;height:18.6px;border:1px solid #c2c4cb;border-radius:3px;background:#fff"></div>
<div class="t" style="left:844.4px;top:563.6px;font-size:11.8px;color:#333">10</div>
<svg width="10" height="6" viewBox="0 0 10 6" style="left:872px;top:569px" fill="none" stroke="#8c8e96" stroke-width="1" stroke-linecap="round" stroke-linejoin="round"><path d="M1 .8 L5 5 L9 .8"/></svg>
<div class="t pg" style="left:900.4px;top:563.6px;font-size:10.8px;color:#444">条</div>
<div class="t pg" style="left:918px;top:563.6px;font-size:10.8px;color:#444">跳至</div>
<div class="a" style="left:947.4px;top:562px;width:57px;height:18.6px;border:1px solid #c2c4cb;border-radius:3px;background:#fff"></div>
<div class="t pg" style="left:1012px;top:563.6px;font-size:10.8px;color:#444">页</div>
<!-- ===== watermark ===== -->
<svg width="41.2" height="35" viewBox="0 0 40 34" style="left:784.2px;top:534.3px" opacity=".82">
  <path d="M14.5 .6 C6.8 .6 .8 5.8 .8 12.2 C.8 15.8 2.8 19 5.8 21.1 L4.4 25.6 L9.6 22.9 C11.1 23.4 12.8 23.7 14.5 23.7 C22.2 23.7 28.2 18.6 28.2 12.2 C28.2 5.8 22.2 .6 14.5 .6Z" fill="#9b9b9b"/>
  <circle cx="10" cy="8.8" r="1.7" fill="#fff"/><circle cx="19" cy="8.8" r="1.7" fill="#fff"/>
  <path d="M27.6 11.6 C34.2 11.6 39.2 16 39.2 21.4 C39.2 24.4 37.6 27 35.2 28.8 L36.2 32.6 L32 30.4 C30.6 30.9 29.1 31.1 27.6 31.1 C21 31.1 16 26.8 16 21.4 C16 16 21 11.6 27.6 11.6Z" fill="#9b9b9b" stroke="#fff" stroke-width="1.4"/>
  <circle cx="23.8" cy="18.6" r="1.5" fill="#fff"/><circle cx="31.4" cy="18.6" r="1.5" fill="#fff"/>
</svg>
<div class="t wm" style="left:833.2px;top:533px;letter-spacing:.9px">公众号</div>
<div class="t wm" style="left:925px;top:533.4px;width:24px;text-align:center;letter-spacing:0">·</div>
<div class="t wm" style="left:955px;top:533px;letter-spacing:1.3px">智石开</div>
<!-- right window edge -->
<div class="a" style="left:1078.9px;top:2px;width:1.1px;height:594px;background:linear-gradient(180deg,#d9dae0 0,#e6e7ec 125px,#c9ccd8 126px,#b2b5c0 100%)"></div>
</body>
</html>
